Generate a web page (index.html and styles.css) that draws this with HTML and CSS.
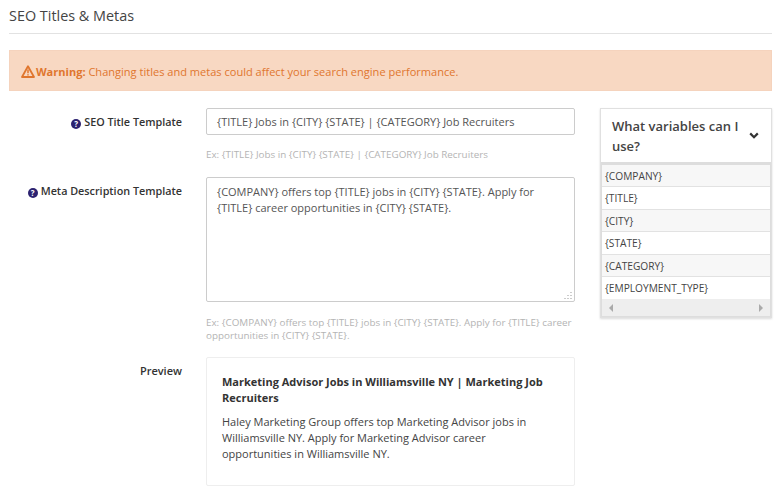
FILE: index.html
```html
<!DOCTYPE html>
<html lang="en">
<head>
<meta charset="utf-8">
<title>SEO Titles &amp; Metas</title>
<link rel="stylesheet" href="styles.css">
</head>
<body>
<div class="page">
  <h1 class="title">SEO Titles &amp; Metas</h1>
  <div class="alert">
    <svg class="warn" viewBox="0 0 14 13" width="14" height="13"><path d="M7 1.2 L13 12 H1 Z" fill="none" stroke="#e0762e" stroke-width="1.8" stroke-linejoin="round"/><path d="M7 4.6V8.2M7 9.2v1.4" stroke="#e0762e" stroke-width="1.5"/></svg>
    <b>Warning:</b> Changing titles and metas could affect your search engine performance.
  </div>
  <div class="content">
    <div class="form">
      <div class="row row-title">
        <label class="label"><span class="q">?</span>SEO Title Template</label>
        <div class="field">
          <div class="input">{TITLE} Jobs in {CITY} {STATE} | {CATEGORY} Job Recruiters</div>
          <p class="help help-title">Ex: {TITLE} Jobs in {CITY} {STATE} | {CATEGORY} Job Recruiters</p>
        </div>
      </div>
      <div class="row row-meta">
        <label class="label"><span class="q">?</span>Meta Description Template</label>
        <div class="field">
          <div class="textarea">{COMPANY} offers top {TITLE} jobs in {CITY} {STATE}. Apply for {TITLE} career opportunities in {CITY} {STATE}.
            <svg class="grip" viewBox="0 0 9 9" width="9" height="9"><path d="M8 1v1M5 4v1M8 4v1M2 7v1M5 7v1M8 7v1" stroke="#999" stroke-width="1"/></svg>
          </div>
          <p class="help help-meta">Ex: {COMPANY} offers top {TITLE} jobs in {CITY} {STATE}. Apply for {TITLE} career opportunities in {CITY} {STATE}.</p>
        </div>
      </div>
      <div class="row row-preview">
        <label class="label label-plain">Preview</label>
        <div class="field">
          <div class="preview">
            <h2 class="preview-title">Marketing Advisor Jobs in Williamsville NY | Marketing Job Recruiters</h2>
            <p class="preview-text">Haley Marketing Group offers top Marketing Advisor jobs in Williamsville NY. Apply for Marketing Advisor career opportunities in Williamsville NY.</p>
          </div>
        </div>
      </div>
    </div>
    <aside class="side">
      <div class="side-head">
        <span>What variables can I use?</span>
        <svg class="chev" viewBox="0 0 10 7" width="10" height="7"><path d="M1.2 1.4 5 5.2 8.8 1.4" fill="none" stroke="#333" stroke-width="2.2"/></svg>
      </div>
      <div class="side-body">
        <div class="var">{COMPANY}</div>
        <div class="var">{TITLE}</div>
        <div class="var">{CITY}</div>
        <div class="var">{STATE}</div>
        <div class="var">{CATEGORY}</div>
        <div class="var">{EMPLOYMENT_TYPE}</div>
        <div class="scroll"><i class="arrow-l"></i><i class="arrow-r"></i></div>
      </div>
    </aside>
  </div>
</div>
</body>
</html>
```
FILE: styles.css
```css
* { box-sizing: border-box; }
html, body { margin: 0; padding: 0; background: #fff; }
body { font-family: "Open Sans", sans-serif; font-size: 11px; color: #333; height: 491px; overflow: hidden; }
.page { padding: 0 10px 0 9px; }
.title { margin: 0; height: 34px; padding-top: 6px; font-size: 14.4px; line-height: 20px; font-weight: 400; color: #444; border-bottom: 1px solid #e2e2e2; }
.alert { margin-top: 16px; height: 41px; padding-left: 11px; line-height: 41px; background: #f8d8c2; border: 1px solid #f5d3bd; color: #e0762e; font-size: 11.05px; }
.alert b { font-weight: 700; margin-left: -2px; }
.warn { vertical-align: -2px; }
.content { display: flex; margin-top: 17px; }
.form { width: 566px; }
.row { display: flex; }
.label { width: 173px; flex: none; margin-right: 24px; text-align: right; font-weight: 600; font-size: 10.8px; line-height: 15px; color: #333; }
.row-title .label { padding-top: 6px; }
.row-meta .label { padding-top: 6px; }
.row-preview .label { padding-top: 6px; }
.label-plain { font-size: 11px; }
.q { display: inline-block; width: 10px; height: 10px; margin-right: 3px; border-radius: 50%; background: #2c2270; color: #fff; font-size: 8px; font-weight: 700; line-height: 10px; text-align: center; vertical-align: -1px; }
.field { width: 369px; }
.input { height: 27px; padding: 0 9px 0 10px; border: 1px solid #ccc; border-radius: 2px; font-size: 11px; line-height: 26px; color: #555; }
.textarea { position: relative; height: 125px; padding: 6px 10px; border: 1px solid #ccc; border-radius: 2px; font-size: 11px; line-height: 16px; color: #555; }
.grip { position: absolute; right: 2px; bottom: 1px; }
.help { margin: 0; font-size: 9.85px; line-height: 13px; color: #b4b4b4; }
.help-title { padding-top: 13px; height: 42px; }
.help-meta { padding-top: 14px; height: 55px; }
.preview { height: 129px; padding: 16px 22px 15px 15px; border: 1px solid #eee; border-radius: 2px; }
.preview-title { margin: 0 0 8px; font-size: 11px; line-height: 16px; font-weight: 700; color: #333; }
.preview-text { margin: 0; font-size: 11px; line-height: 16px; color: #444; }
.side { width: 172px; margin-left: 25px; height: 210px; border: 1px solid #e0e0e0; box-shadow: 0 1px 2px rgba(0,0,0,.15); }
.side-head { display: flex; align-items: center; justify-content: space-between; height: 53px; padding: 0 12px 0 11px; font-size: 13px; line-height: 20px; font-weight: 600; color: #444; }
.side-head span { width: 130px; }
.side-body { border: 1px solid #ddd; border-top-width: 3px; background: #fff; }
.var { height: 22.4px; padding-left: 3px; font-size: 10.2px; line-height: 23px; color: #444; border-bottom: 1px solid #e2e2e2; }
.var:nth-child(odd) { background: #f7f7f7; }
.var:nth-child(6) { border-bottom: 0; }
.scroll { display: flex; align-items: center; justify-content: space-between; height: 17px; padding: 0 7px; background: #eee; }
.arrow-l, .arrow-r { width: 0; height: 0; border-top: 4px solid transparent; border-bottom: 4px solid transparent; }
.arrow-l { border-right: 4px solid #aaa; }
.arrow-r { border-left: 4px solid #aaa; }
```
